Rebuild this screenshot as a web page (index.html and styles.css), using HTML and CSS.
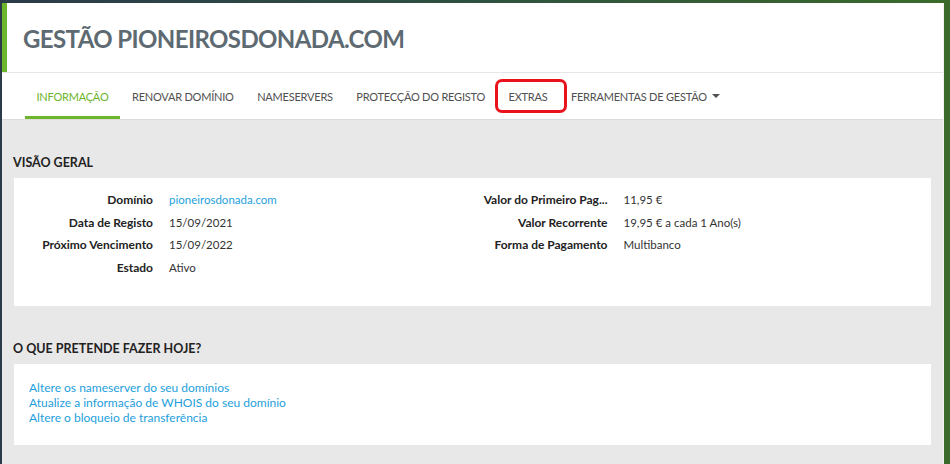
FILE: index.html
```html
<!DOCTYPE html>
<html lang="pt">
<head>
    <meta charset="UTF-8">
    <meta name="viewport" content="width=device-width, initial-scale=1.0">
    <title>Gestão pioneirosdonada.com</title>
    <link rel="stylesheet" href="styles.css">
</head>
<body>
    <div class="window">
        <div class="domain-header">
            <h1 class="domain-title">GESTÃO PIONEIROSDONADA.COM</h1>
        </div>

        <nav class="domain-tabs">
            <a class="tab active" href="#">INFORMAÇÃO</a>
            <a class="tab" href="#">RENOVAR DOMÍNIO</a>
            <a class="tab" href="#">NAMESERVERS</a>
            <a class="tab" href="#">PROTECÇÃO DO REGISTO</a>
            <a class="tab highlighted" href="#">EXTRAS</a>
            <a class="tab" href="#">FERRAMENTAS DE GESTÃO <span class="caret"></span></a>
        </nav>

        <div class="domain-content">
            <h3 class="section-title">VISÃO GERAL</h3>
            <div class="panel overview">
                <dl class="info-list">
                    <dt>Domínio</dt>
                    <dd><a href="#">pioneirosdonada.com</a></dd>
                    <dt>Data de Registo</dt>
                    <dd>15/09/2021</dd>
                    <dt>Próximo Vencimento</dt>
                    <dd>15/09/2022</dd>
                    <dt>Estado</dt>
                    <dd>Ativo</dd>
                </dl>
                <dl class="info-list">
                    <dt title="Valor do Primeiro Pagamento">Valor do Primeiro Pag...</dt>
                    <dd>11,95 €</dd>
                    <dt>Valor Recorrente</dt>
                    <dd>19,95 € a cada 1 Ano(s)</dd>
                    <dt>Forma de Pagamento</dt>
                    <dd>Multibanco</dd>
                </dl>
            </div>

            <h3 class="section-title">O QUE PRETENDE FAZER HOJE?</h3>
            <div class="panel actions">
                <a href="#">Altere os nameserver do seu domínios</a>
                <a href="#">Atualize a informação de WHOIS do seu domínio</a>
                <a href="#">Altere o bloqueio de transferência</a>
            </div>
        </div>
    </div>
</body>
</html>
```

FILE: styles.css
```css
:root {
    --green: #6cb52d;
    --gray-bg: #e8e8e8;
    --text-dark: #222222;
    --text-nav: #505050;
    --link: #1ea0dc;
    --title: #5e6a72;
}

* {
    margin: 0;
    padding: 0;
    box-sizing: border-box;
}

body {
    background: linear-gradient(90deg, #2b3b4a 0%, #2f5140 50%, #3b6a2b 100%);
    font-family: Lato, "Noto Sans", sans-serif;
    font-size: 12px;
    color: #333;
    height: 100vh;
    overflow: hidden;
    padding: 3px 6px 0 2px;
}

a {
    color: var(--link);
    text-decoration: none;
}

.window {
    background: var(--gray-bg);
    height: 100%;
    border-right: 1px solid #f2f2f2;
}

.domain-header {
    background: #fff;
    border-left: 5px solid var(--green);
    height: 69px;
    padding: 0 16px;
    display: flex;
    align-items: center;
}

.domain-title {
    font-size: 24px;
    font-weight: 700;
    color: var(--title);
    letter-spacing: -0.6px;
    padding-top: 1px;
}

.domain-tabs {
    background: #fff;
    border-top: 1px solid #e6e6e6;
    border-bottom: 1px solid #dcdcdc;
    height: 48px;
    padding: 0 23px;
    display: flex;
}

.tab {
    position: relative;
    display: flex;
    align-items: center;
    padding: 3px 12px 0 11.5px;
    color: var(--text-nav);
    font-size: 11px;
    letter-spacing: -0.22px;
    border-bottom: 3px solid transparent;
}

.tab.active {
    color: var(--green);
    border-bottom-color: var(--green);
}

/* annotation box around the extras tab */
.tab.highlighted::after {
    content: "";
    position: absolute;
    left: -2px;
    right: -8px;
    top: 6px;
    bottom: 3px;
    border: 3px solid #e8131b;
    border-radius: 7px;
}

.caret {
    display: inline-block;
    margin-left: 5px;
    border-top: 4px solid var(--text-nav);
    border-left: 4px solid transparent;
    border-right: 4px solid transparent;
}

.domain-content {
    padding: 0 12px;
}

.section-title {
    font-size: 12.5px;
    font-weight: 700;
    color: var(--text-dark);
    line-height: 18px;
    margin: 34px 0 6px -1px;
}

.panel {
    background: #fff;
}

.overview {
    display: grid;
    grid-template-columns: 1fr 1fr;
    column-gap: 22px;
    padding: 11px 15px 27px;
    height: 128px;
}

.info-list {
    display: grid;
    grid-template-columns: 124px 1fr;
    align-content: start;
    column-gap: 16px;
    line-height: 22.7px;
}

.info-list dt {
    font-weight: 700;
    color: var(--text-dark);
    text-align: right;
    white-space: nowrap;
}

.info-list dd {
    color: #333;
    font-size: 11.5px;
}

.actions {
    display: flex;
    flex-direction: column;
    align-items: flex-start;
    padding: 16px 15px 0;
    height: 81px;
    line-height: 15px;
}
```
